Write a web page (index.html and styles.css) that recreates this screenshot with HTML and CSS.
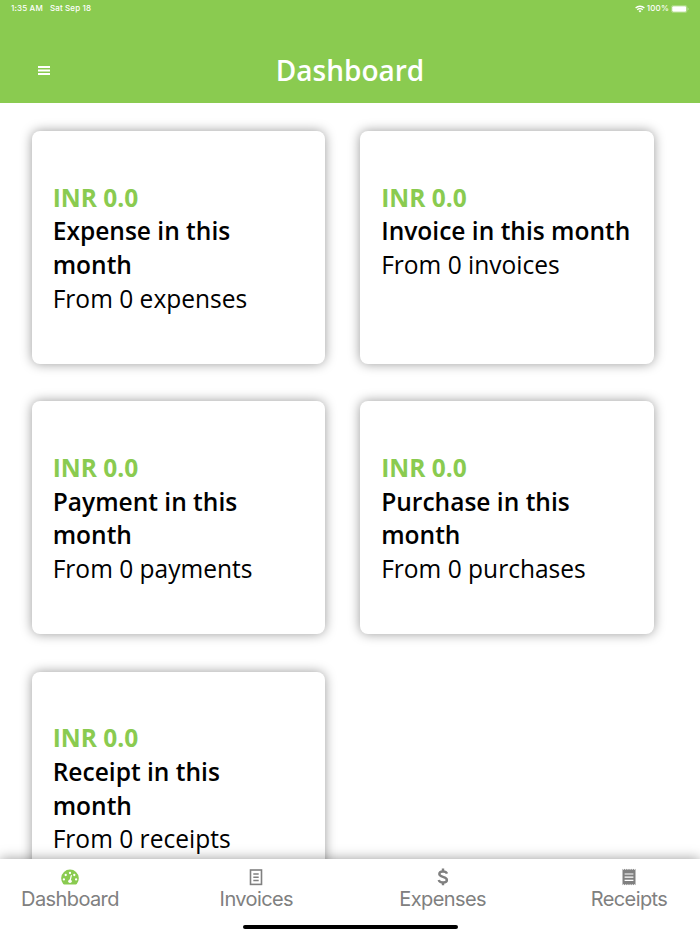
FILE: index.html
```
<!DOCTYPE html>
<html lang="en">
<head>
    <meta charset="UTF-8">
    <meta name="viewport" content="width=device-width, initial-scale=1.0">
    <title>Dashboard</title>
    <link rel="stylesheet" href="styles.css">
</head>
<body>

    <header class="header">
        <div class="status-bar">
            <span class="time">1:35 AM</span>
            <span class="date">Sat Sep 18</span>
            <svg class="wifi" viewBox="0 0 20 15">
                <path d="M1.200 5.600a12.500 12.500 0 0 1 17.600 0M4.500 9a7.500 7.500 0 0 1 11 0" fill="none" stroke="#fff" stroke-width="2.600"/>
                <path d="M7 11.300a4.500 4.500 0 0 1 6 0l-3 3z" fill="#fff"/>
            </svg>
            <span class="percent">100%</span>
            <svg class="battery" viewBox="0 0 18 8">
                <rect x="0.400" y="0.400" width="15.600" height="7.200" rx="2" fill="none" stroke="#fff" stroke-opacity="0.4" stroke-width="0.700"/>
                <rect x="1.200" y="1.200" width="14" height="5.600" rx="1.200" fill="#fff"/>
                <path d="M16.800 2.800c1 .3 1 2.100 0 2.400z" fill="#fff" fill-opacity="0.5"/>
            </svg>
        </div>
        <div class="title-bar">
            <button class="menu-btn" aria-label="Menu">
                <svg viewBox="0 0 12 9"><path d="M0 1h12M0 4.500h12M0 8h12" stroke="#fff" stroke-width="1.800"/></svg>
            </button>
            <h1>Dashboard</h1>
        </div>
    </header>

    <main class="cards">
        <div class="card">
            <p class="amount">INR 0.0</p>
            <h2>Expense in this month</h2>
            <p>From 0 expenses</p>
        </div>
        <div class="card">
            <p class="amount">INR 0.0</p>
            <h2>Invoice in this month</h2>
            <p>From 0 invoices</p>
        </div>
        <div class="card">
            <p class="amount">INR 0.0</p>
            <h2>Payment in this month</h2>
            <p>From 0 payments</p>
        </div>
        <div class="card">
            <p class="amount">INR 0.0</p>
            <h2>Purchase in this month</h2>
            <p>From 0 purchases</p>
        </div>
        <div class="card">
            <p class="amount">INR 0.0</p>
            <h2>Receipt in this month</h2>
            <p>From 0 receipts</p>
        </div>
    </main>

    <footer class="footer">
        <nav class="tabs">
            <a class="tab active">
                <svg viewBox="0 0 18 18">
                    <path d="M2.200 16A8.800 8.800 0 1 1 15.800 16Q15.400 16.400 14.800 16.400H3.200Q2.600 16.400 2.200 16z" fill="currentColor"/>
                    <g fill="#fff">
                        <circle cx="2.900" cy="11.400" r="1.150"/>
                        <circle cx="4.700" cy="7" r="1.150"/>
                        <circle cx="9" cy="5" r="1.150"/>
                        <circle cx="13.300" cy="7" r="1.150"/>
                        <circle cx="15.100" cy="11.400" r="1.150"/>
                        <circle cx="9" cy="13.300" r="1.800"/>
                    </g>
                    <path d="M9 13l1.300-5.300" stroke="#fff" stroke-width="1.200" stroke-linecap="round"/>
                </svg>
                <span>Dashboard</span>
            </a>
            <a class="tab">
                <svg viewBox="0 0 18 18" fill="none" stroke="currentColor">
                    <rect x="3.500" y="2" width="11" height="14.400" stroke-width="1.600"/>
                    <path d="M6.300 6h5.400M6.300 9.200h5.400M6.300 12.400h5.400" stroke-width="1.500"/>
                </svg>
                <span>Invoices</span>
            </a>
            <a class="tab">
                <svg viewBox="0 0 18 18" fill="none" stroke="currentColor">
                    <path d="M13 5.600C12.500 4.200 11 3.500 9 3.500 6.700 3.500 5.300 4.500 5.300 6.100 5.300 9.700 12.900 8 12.900 11.900 12.900 13.500 11.400 14.500 9.100 14.500 6.700 14.500 5.200 13.600 4.700 12" stroke-width="2.400"/>
                    <path d="M9 .5v3M9 14v3.200" stroke-width="2.400"/>
                </svg>
                <span>Expenses</span>
            </a>
            <a class="tab">
                <svg viewBox="0 0 18 18">
                    <path d="M2.500 .8l1.100 1.300L4.680 .8l1.080 1.300L6.840 .8l1.080 1.300L9 .8l1.080 1.300L11.160 .8l1.080 1.300L13.320 .8l1.080 1.300L15.500 .8v16.400l-1.100-1.300-1.080 1.300-1.080-1.300-1.080 1.300-1.080-1.300L9 17.200l-1.080-1.300-1.080 1.300-1.080-1.300-1.080 1.300-1.080-1.300-1.100 1.300z" fill="currentColor"/>
                    <path d="M4.600 6h8.800M4.600 9.200h8.800M4.600 12.400h8.800" stroke="#fff" stroke-width="1.200"/>
                </svg>
                <span>Receipts</span>
            </a>
        </nav>
        <div class="home-indicator"></div>
    </footer>

</body>
</html>
```
FILE: styles.css
```
* {
    box-sizing: border-box;
}

body {
    margin: 0;
    height: 100vh;
    display: flex;
    flex-direction: column;
    overflow: hidden;
    background: #fff;
    color: #000;
    font-family: 'Open Sans', sans-serif;
}

h1, h2, p {
    margin: 0;
}

/* Header */
.header {
    flex: none;
    height: 103px;
    background: #8acb50;
    color: #fff;
}

.status-bar {
    display: flex;
    align-items: center;
    height: 17px;
    padding: 0 11px;
    font: 500 8px/17px 'Inter', sans-serif;
    letter-spacing: 0.15px;
}

.date {
    margin-left: 7px;
}

.wifi {
    width: 10px;
    height: 8px;
    margin-left: auto;
}

.percent {
    margin: 0 2px;
}

.battery {
    width: 18px;
    height: 8px;
}

.title-bar {
    display: grid;
    grid-template-columns: 50px 1fr 50px;
    align-items: center;
    height: 73px;
    margin-top: 17px;
    padding: 0 38px;
}

.menu-btn {
    display: flex;
    width: 12px;
    padding: 0;
    border: none;
    background: none;
}

.menu-btn svg {
    width: 12px;
    height: 9px;
}

.title-bar h1 {
    padding-bottom: 2px;
    font-size: 28px;
    font-weight: 600;
    text-align: center;
}

/* Cards */
.cards {
    flex: 1;
    min-height: 0;
    display: grid;
    grid-template-columns: 293.7px 293.7px;
    grid-auto-rows: 232.5px;
    align-content: start;
    gap: 37.7px 34.8px;
    padding: 28.3px 31.7px 0;
    overflow: hidden;
}

.card {
    padding: 49.4px 21px;
    border-radius: 8px;
    background: #fff;
    box-shadow: 0 0 12px rgba(0, 0, 0, 0.4);
    font-size: 24.54px;
    line-height: 33.8px;
}

.card h2 {
    font-size: inherit;
    font-weight: 600;
}

.amount {
    color: #8acb50;
    font-weight: 700;
}

/* Bottom tabs */
.footer {
    flex: none;
    position: relative;
    height: 75.500px;
    background: #fff;
    box-shadow: 0 0 12px rgba(0, 0, 0, 0.4);
}

.tabs {
    display: flex;
    justify-content: space-between;
    padding: 9px 21px 0 20px;
}

.tab {
    display: flex;
    flex-direction: column;
    align-items: center;
    width: 100px;
    color: #808080;
    font: 400 20px/26px 'Inter', sans-serif;
    letter-spacing: -0.6px;
}

.tab svg {
    width: 18px;
    height: 18px;
}

.tab.active svg {
    color: #8acb50;
}

.home-indicator {
    width: 215px;
    height: 4px;
    margin: 13px auto 0;
    border-radius: 2px;
    background: #000;
}
```
